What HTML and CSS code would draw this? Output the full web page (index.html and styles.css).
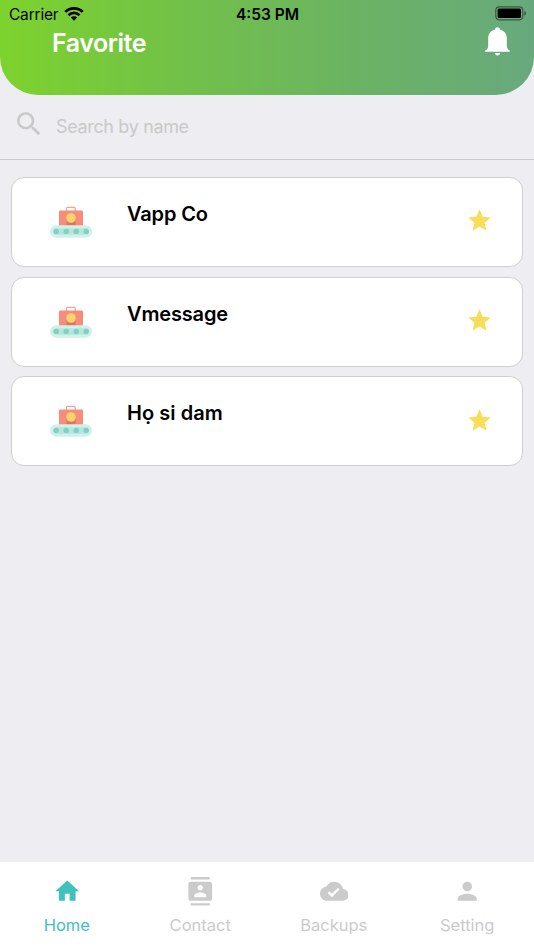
FILE: index.html
```html
<!DOCTYPE html>
<html lang="en">
<head>
<meta charset="utf-8">
<title>Favorite</title>
<link rel="stylesheet" href="styles.css">
</head>
<body>
<svg class="defs" aria-hidden="true">
  <symbol id="luggage" viewBox="0 0 44 32">
    <path d="M17.500 5V2.500q0-1.200 1.200-1.200h6.300q1.200 0 1.200 1.200V5" fill="none" stroke="#f3a397" stroke-width="1.300"/>
    <rect x="10" y="4.500" width="24" height="15.500" rx="1" fill="#f58d7a"/>
    <path d="M17.500 13h9v7h-9z" fill="#dc7467"/>
    <circle cx="22" cy="12" r="4.800" fill="#fad36c"/>
    <rect x="1" y="19.200" width="42" height="12.500" rx="6.250" fill="#d0f0e9"/>
    <rect x="4" y="22.200" width="36" height="6.500" rx="3.250" fill="#b5e5dc"/>
    <g fill="#7dd2c1"><circle cx="7.200" cy="25.400" r="2.700"/><circle cx="17.200" cy="25.400" r="2.700"/><circle cx="27.200" cy="25.400" r="2.700"/><circle cx="37.200" cy="25.400" r="2.700"/></g>
  </symbol>
  <symbol id="star" viewBox="0 0 24 24"><path d="M12 17.270 18.180 21l-1.640-7.030L22 9.240l-7.190-.61L12 2 9.190 8.630 2 9.240l5.460 4.730L5.820 21z"/></symbol>
</svg>
<header class="header">
  <div class="status">
    <div class="carrier"><span>Carrier</span>
      <svg class="wifi" viewBox="0 0 20 15"><g fill="none" stroke="#000" stroke-width="2.700"><path d="M1.300 5.900a12.300 12.300 0 0 1 17.400 0"/><path d="M4.500 9.200a7.800 7.800 0 0 1 11 0"/></g><path d="M6.800 11.500a4.500 4.500 0 0 1 6.400 0L10 14.700z"/></svg>
    </div>
    <div class="time">4:53 PM</div>
    <svg class="battery" viewBox="0 0 32 15"><rect x=".8" y=".8" width="27" height="13" rx="3.500" fill="none" stroke="#000" stroke-opacity=".48" stroke-width="1.200"/><rect x="2.600" y="2.600" width="23.400" height="9.400" rx="1.500"/><path d="M29.300 5q1.700.6 1.700 2.400t-1.700 2.400z" opacity=".5"/></svg>
  </div>
  <div class="titlebar">
    <h1>Favorite</h1>
    <svg class="bell" viewBox="0 0 25 29"><path d="M12.500.2c1.500 0 2.400 1.100 2.400 2.300 4 1 6.900 4.200 6.900 8.500v7.400c0 2.600.8 3.800 3 5.200v1.100H.2v-1.100c2.200-1.400 3-2.600 3-5.200V11c0-4.300 2.900-7.500 6.900-8.500 0-1.200.9-2.300 2.400-2.300zM9.800 25.900h5.400c-.2 1.600-1.200 2.500-2.700 2.500s-2.500-.9-2.700-2.500z" fill="#fff"/></svg>
  </div>
</header>
<div class="search">
  <svg class="glass" viewBox="0 0 24 24"><path d="M15.500 14h-.79l-.28-.27A6.471 6.471 0 0 0 16 9.500 6.500 6.500 0 1 0 9.500 16c1.610 0 3.090-.59 4.230-1.570l.27.28v.79l5 4.990L20.490 19l-4.990-5zm-6 0C7.010 14 5 11.990 5 9.500S7.010 5 9.500 5 14 7.010 14 9.500 11.990 14 9.500 14z"/></svg>
  <span class="placeholder">Search by name</span>
</div>
<main class="list">
  <article class="card"><svg class="avatar"><use href="#luggage"/></svg><h2>Vapp Co</h2><svg class="star"><use href="#star"/></svg></article>
  <article class="card"><svg class="avatar"><use href="#luggage"/></svg><h2>Vmessage</h2><svg class="star"><use href="#star"/></svg></article>
  <article class="card"><svg class="avatar"><use href="#luggage"/></svg><h2 class="spaced">Họ si dam</h2><svg class="star"><use href="#star"/></svg></article>
</main>
<nav class="tabs">
  <div class="tab active"><svg viewBox="0 0 24 24"><path d="M10 20v-6h4v6h5v-8h3L12 3 2 12h3v8z"/></svg><span>Home</span></div>
  <div class="tab"><svg viewBox="0 0 24 24"><path d="M20 0H4v2h16V0zM4 24h16v-2H4v2zM20 4H4c-1.100 0-2 .9-2 2v12c0 1.100.9 2 2 2h16c1.100 0 2-.9 2-2V6c0-1.100-.9-2-2-2zm-8 2.750c1.240 0 2.250 1.010 2.250 2.250s-1.010 2.250-2.250 2.250S9.750 10.240 9.750 9 10.760 6.750 12 6.750zM17 17H7v-1.500c0-1.670 3.330-2.500 5-2.500s5 .83 5 2.500V17z"/></svg><span>Contact</span></div>
  <div class="tab"><svg viewBox="0 0 24 24"><path d="M19.350 10.040A7.490 7.490 0 0 0 12 4C9.110 4 6.600 5.640 5.350 8.040A5.994 5.994 0 0 0 0 14c0 3.310 2.690 6 6 6h13c2.760 0 5-2.240 5-5 0-2.640-2.050-4.780-4.650-4.960zM10 17l-3.500-3.500 1.410-1.410L10 14.170 15.180 9l1.410 1.410L10 17z"/></svg><span>Backups</span></div>
  <div class="tab"><svg viewBox="0 0 24 24"><path d="M12 12c2.210 0 4-1.790 4-4s-1.790-4-4-4-4 1.790-4 4 1.790 4 4 4zm0 2c-2.670 0-8 1.340-8 4v2h16v-2c0-2.660-5.330-4-8-4z"/></svg><span>Setting</span></div>
</nav>
</body>
</html>
```
FILE: styles.css
```css
* { box-sizing: border-box; }
body {
  margin: 0;
  height: 950px;
  display: flex;
  flex-direction: column;
  overflow: hidden;
  background: #eeedf2;
  font-family: Inter, "Liberation Sans", sans-serif;
}
svg { display: block; flex: none; }
h1, h2 { margin: 0; }
.defs { width: 0; height: 0; position: absolute; }
.header {
  height: 95px;
  flex: none;
  border-radius: 0 0 38px 38px;
  background: linear-gradient(90deg, #7dd32d, #72c148 33%, #6bb363 66%, #68a97d);
}
.status {
  height: 27px;
  display: grid;
  grid-template-columns: 1fr auto 1fr;
  align-items: center;
  padding: 0 8px 0 9px;
}
.carrier { display: flex; align-items: center; gap: 6px; }
.carrier span { padding-top: 1px; font-size: 15.500px; letter-spacing: -.2px; }
.wifi { width: 20px; height: 15px; margin-top: -1px; }
.time { padding-top: 1px; font-weight: 600; font-size: 15.500px; }
.battery { width: 32px; height: 15px; justify-self: end; margin-right: -1px; }
.titlebar {
  display: flex;
  align-items: flex-start;
  justify-content: space-between;
  padding: 0 24px 0 52px;
  color: #fff;
}
h1 { font-size: 25px; line-height: 32px; font-weight: 600; letter-spacing: -.45px; }
.bell { width: 25px; height: 29px; }
.search {
  height: 65px;
  flex: none;
  display: flex;
  align-items: flex-start;
  gap: 11px;
  padding: 13px 13px 0;
  border-bottom: 1px solid #c9c9cc;
  color: #c9c9c9;
}
.glass { width: 32px; height: 32px; fill: currentColor; }
.placeholder { font-size: 18px; line-height: 37px; letter-spacing: -.35px; }
.list {
  flex: 1;
  display: flex;
  flex-direction: column;
  gap: 9.600px;
  padding: 17.200px 11px 0;
}
.card {
  height: 90px;
  display: flex;
  align-items: flex-start;
  padding: 0 29.500px 0 37px;
  border: 1px solid #cfcfd2;
  border-radius: 13px;
  background: #fff;
}
.avatar { width: 44px; height: 32px; margin-top: 28px; }
h2 { flex: 1; margin: 22px 0 0 34px; font-size: 20px; line-height: 28px; font-weight: 600; letter-spacing: -.15px; }
.spaced { letter-spacing: .06px; }
.star { width: 27px; height: 27px; margin-top: 29.200px; fill: #f9dd58; }
.tabs {
  height: 88px;
  flex: none;
  display: grid;
  grid-template-columns: repeat(4, 1fr);
  background: #fff;
  color: #cbcbcb;
}
.tab { display: flex; flex-direction: column; align-items: center; padding-top: 15px; font-size: 16.500px; }
.tab svg { width: 28.500px; height: 28.500px; fill: currentColor; }
.tab span { margin-top: 8px; line-height: 22px; }
.active { color: #3fc1bd; }
```
